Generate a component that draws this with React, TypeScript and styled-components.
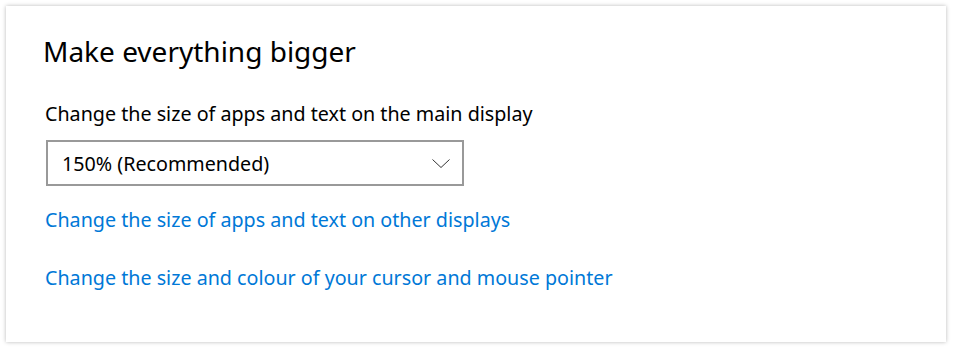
import styled, { createGlobalStyle } from 'styled-components';

const GlobalStyle = createGlobalStyle`
  html, body {
    margin: 0;
    padding: 0;
    background: #ffffff;
  }
  body {
    font-family: "Segoe UI", "Noto Sans", "Open Sans", sans-serif;
    color: #000000;
  }
`;

const Page = styled.div({
  width: 953,
  height: 348,
  boxSizing: 'border-box',
  padding: '6px 7px 6px 6px',
  background: '#ffffff',
});

const Card = styled.div({
  boxSizing: 'border-box',
  height: 336,
  background: '#ffffff',
  boxShadow: '0 0 4px rgba(0, 0, 0, 0.28)',
  padding: '27px 37px 0 37px',
  display: 'flex',
  flexDirection: 'column',
});

const Heading = styled.h1({
  margin: 0,
  fontSize: 28,
  fontWeight: 400,
  lineHeight: '36px',
  color: '#000000',
});

const Label = styled.div({
  marginTop: 32,
  marginLeft: 2,
  fontSize: 19.7,
  lineHeight: '26px',
  color: '#000000',
});

const Select = styled.div({
  marginTop: 13,
  marginLeft: 3,
  width: 418,
  height: 46,
  boxSizing: 'border-box',
  border: '2px solid #999999',
  display: 'flex',
  alignItems: 'center',
  justifyContent: 'space-between',
  padding: '0 12px 0 14px',
  fontSize: 19.7,
  color: '#000000',
});

const Chevron = styled.svg({
  width: 18,
  height: 9,
  marginTop: 1,
});

const Link = styled.a<{ $gap: number }>((props) => ({
  display: 'block',
  marginTop: props.$gap,
  marginLeft: 2,
  fontSize: 19.7,
  lineHeight: '26px',
  color: '#0078d7',
  textDecoration: 'none',
}));

export default function App() {
  return (
    <>
      <GlobalStyle />
      <Page>
        <Card>
          <Heading>Make everything bigger</Heading>
          <Label>Change the size of apps and text on the main display</Label>
          <Select>
            <span>150% (Recommended)</span>
            <Chevron viewBox="0 0 18 9">
              <path d="M0.5 0.5 L9 8.5 L17.5 0.5" fill="none" stroke="#333333" strokeWidth="1" />
            </Chevron>
          </Select>
          <Link $gap={21}>Change the size of apps and text on other displays</Link>
          <Link $gap={32}>Change the size and colour of your cursor and mouse pointer</Link>
        </Card>
      </Page>
    </>
  );
}
